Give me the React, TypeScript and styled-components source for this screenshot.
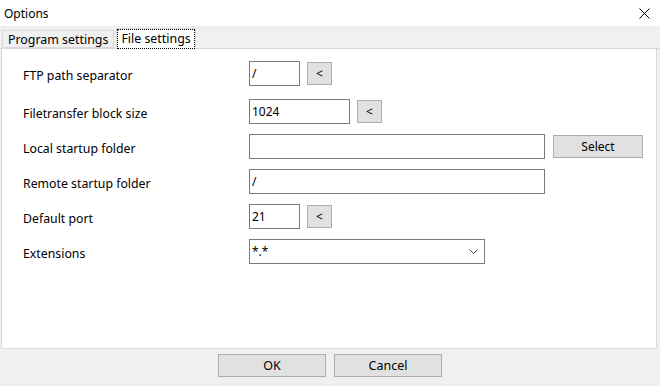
import styled, { createGlobalStyle } from "styled-components";

const GlobalStyle = createGlobalStyle`
  html, body {
    margin: 0;
    padding: 0;
    background: #f0f0f0;
  }
  body {
    font-family: "Noto Sans", "Open Sans", sans-serif;
    font-size: 12px;
    color: #000;
  }
`;

const Window = styled.div`
  width: 660px;
  height: 386px;
  display: flex;
  flex-direction: column;
  background: #f0f0f0;
  overflow: hidden;
`;

const TitleBar = styled.div`
  height: 26px;
  background: #fff;
  display: flex;
  align-items: center;
  justify-content: space-between;
  padding: 0 10px 0 4px;
  font-size: 12px;
`;

const CloseIcon = styled.svg`
  width: 11px;
  height: 11px;
`;

const TabStrip = styled.div`
  height: 22px;
  display: flex;
  align-items: flex-end;
  padding-left: 2px;
  border-bottom: 1px solid #d9d9d9;
`;

const Tab = styled.div<{ $active?: boolean }>`
  height: ${(p) => (p.$active ? "21px" : "18px")};
  margin-bottom: ${(p) => (p.$active ? "-1px" : "0")};
  padding: 0 ${(p) => (p.$active ? "1px" : "5px")};
  display: flex;
  align-items: center;
  background: ${(p) => (p.$active ? "#fff" : "#f0f0f0")};
  border: 1px solid #d9d9d9;
  border-bottom: ${(p) => (p.$active ? "none" : "1px solid #d9d9d9")};
  margin-right: ${(p) => (p.$active ? "0" : "2px")};
  font-size: 12.4px;
  box-sizing: border-box;
`;

const FocusText = styled.span`
  outline: 1px dotted #000;
  padding: 1px 3px 2px;
  line-height: 15px;
`;

const Panel = styled.div`
  flex: 1;
  margin: 0 3px 0 1px;
  background: #fff;
  border: 1px solid #d9d9d9;
  border-top: none;
  padding: 12px 0 0 21px;
  display: flex;
  flex-direction: column;
  gap: 10px;
`;

const Row = styled.div<{ $extra?: number }>`
  display: grid;
  grid-template-columns: 226px 1fr;
  align-items: center;
  height: 25px;
  margin-bottom: ${(p) => p.$extra ?? 0}px;
`;

const Label = styled.div`
  font-size: 12.3px;
  padding-top: 3px;
`;

const Controls = styled.div`
  display: flex;
  align-items: center;
  gap: 7px;
`;

const TextBox = styled.div<{ $width: number }>`
  width: ${(p) => p.$width}px;
  height: 25px;
  box-sizing: border-box;
  border: 1px solid #7a7a7a;
  background: #fff;
  padding-left: 2px;
  display: flex;
  align-items: center;
  font-size: 12px;
`;

const SmallButton = styled.div<{ $width: number }>`
  width: ${(p) => p.$width}px;
  height: 23px;
  box-sizing: border-box;
  border: 1px solid #adadad;
  background: #e1e1e1;
  display: flex;
  align-items: center;
  justify-content: center;
  font-size: 12px;
`;

const Combo = styled(TextBox)`
  justify-content: space-between;
  padding-right: 6px;
`;

const Chevron = styled.svg`
  width: 9px;
  height: 6px;
`;

const Footer = styled.div`
  height: 37px;
  display: flex;
  justify-content: center;
  align-items: flex-start;
  padding-top: 5px;
  box-sizing: border-box;
  gap: 8px;
`;

const DialogButton = styled.div`
  width: 108px;
  height: 23px;
  box-sizing: border-box;
  border: 1px solid #adadad;
  background: #e1e1e1;
  display: flex;
  align-items: center;
  justify-content: center;
  font-size: 12.5px;
`;

export default function App() {
  return (
    <Window>
      <GlobalStyle />
      <TitleBar>
        <span>Options</span>
        <CloseIcon viewBox="0 0 11 11">
          <path d="M0.5 0.5 L10.5 10.5 M10.5 0.5 L0.5 10.5" stroke="#000" strokeWidth="1" />
        </CloseIcon>
      </TitleBar>
      <TabStrip>
        <Tab>Program settings</Tab>
        <Tab $active>
          <FocusText>File settings</FocusText>
        </Tab>
      </TabStrip>
      <Panel>
        <Row $extra={3}>
          <Label>FTP path separator</Label>
          <Controls>
            <TextBox $width={51}>/</TextBox>
            <SmallButton $width={25}>&lt;</SmallButton>
          </Controls>
        </Row>
        <Row>
          <Label>Filetransfer block size</Label>
          <Controls>
            <TextBox $width={101}>1024</TextBox>
            <SmallButton $width={25}>&lt;</SmallButton>
          </Controls>
        </Row>
        <Row>
          <Label>Local startup folder</Label>
          <Controls>
            <TextBox $width={296}></TextBox>
            <SmallButton $width={90} style={{ marginLeft: 1 }}>Select</SmallButton>
          </Controls>
        </Row>
        <Row>
          <Label>Remote startup folder</Label>
          <Controls>
            <TextBox $width={296}>/</TextBox>
          </Controls>
        </Row>
        <Row>
          <Label>Default port</Label>
          <Controls>
            <TextBox $width={51}>21</TextBox>
            <SmallButton $width={25}>&lt;</SmallButton>
          </Controls>
        </Row>
        <Row>
          <Label>Extensions</Label>
          <Controls>
            <Combo $width={236}>
              <span>*.*</span>
              <Chevron viewBox="0 0 9 6">
                <path d="M0.5 0.5 L4.5 4.5 L8.5 0.5" fill="none" stroke="#444" strokeWidth="1" />
              </Chevron>
            </Combo>
          </Controls>
        </Row>
      </Panel>
      <Footer>
        <DialogButton>OK</DialogButton>
        <DialogButton>Cancel</DialogButton>
      </Footer>
    </Window>
  );
}
